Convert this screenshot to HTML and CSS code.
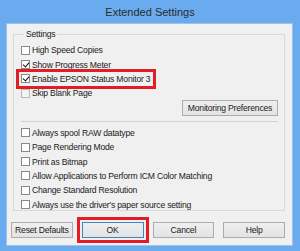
FILE: index.html
```html
<!DOCTYPE html>
<html lang="en">

<head>
    <meta charset="UTF-8">
    <title>Extended Settings</title>
    <link rel="stylesheet" href="styles.css">
</head>

<body>
    <div class="window">
        <!-- title bar -->
        <div class="titlebar">Extended Settings</div>

        <div class="client">
            <fieldset class="group">
                <legend>Settings</legend>

                <div class="row"><span class="box"></span>High Speed Copies</div>
                <div class="row"><span class="box on"></span>Show Progress Meter</div>
                <div class="row mark"><span class="box on"></span>Enable EPSON Status Monitor 3</div>
                <div class="row"><span class="box dim"></span>Skip Blank Page</div>

                <div class="prefs">
                    <button class="btn wide">Monitoring Preferences</button>
                </div>

                <div class="sep"></div>

                <div class="row"><span class="box"></span>Always spool RAW datatype</div>
                <div class="row"><span class="box"></span>Page Rendering Mode</div>
                <div class="row"><span class="box"></span>Print as Bitmap</div>
                <div class="row"><span class="box"></span>Allow Applications to Perform ICM Color Matching</div>
                <div class="row"><span class="box"></span>Change Standard Resolution</div>
                <div class="row"><span class="box"></span>Always use the driver's paper source setting</div>
            </fieldset>

            <!-- dialog buttons -->
            <div class="actions">
                <button class="btn">Reset Defaults</button>
                <button class="btn default mark">OK</button>
                <button class="btn">Cancel</button>
                <button class="btn">Help</button>
            </div>
        </div>
    </div>
</body>

</html>
```

FILE: styles.css
```css
* {
    margin: 0;
    padding: 0;
    box-sizing: border-box;
}

body {
    background: #6aabf0;
    font-family: "Liberation Sans", Arial, sans-serif;
    font-size: 8.6px;
    letter-spacing: -0.2px;
    color: #1a1a1a;
}

.window {
    width: 300px;
    height: 251px;
}

.titlebar {
    height: 23px;
    line-height: 24px;
    text-align: center;
    font-size: 11px;
    letter-spacing: 0;
    color: #2b2b2b;
}

.client {
    margin: 0 7px 0 6px;
    height: 223px;
    background: #f0f0f0;
    border: 1px solid #9cc3ee;
    padding: 5px 7px 0 6px;
}

.group {
    border: 1px solid #d9d9d9;
    padding: 3px 6px 3px 7px;
    height: 182px;
}

.group legend {
    margin-left: 3px;
    padding: 0 2px;
    line-height: 11px;
}

.row {
    display: flex;
    align-items: center;
    height: 14.4px;
    white-space: nowrap;
}

.box {
    width: 9px;
    height: 9px;
    border: 1px solid #8a8a8a;
    background: #fff;
    margin-right: 2px;
    position: relative;
}

.box.dim {
    border-color: #b8b8b8;
    background: #f4f4f4;
}

.box.on::after {
    content: "";
    position: absolute;
    left: 2px;
    top: 0;
    width: 3px;
    height: 5px;
    border-right: 1.5px solid #111;
    border-bottom: 1.5px solid #111;
    transform: rotate(40deg);
}

.row.mark {
    width: fit-content;
    margin-left: -2px;
    padding: 0 3px 0 2px;
    outline: 3px solid #e11d25;
}

.prefs {
    display: flex;
    justify-content: flex-end;
    margin-top: -1px;
}

.sep {
    border-top: 1px solid #d0d0d0;
    margin: 5px 0 4px 0;
}

.btn {
    font-family: inherit;
    font-size: 8.6px;
    letter-spacing: -0.2px;
    color: #1a1a1a;
    height: 16px;
    width: 62px;
    background: linear-gradient(#efefef, #e3e3e3);
    border: 1px solid #acacac;
}

.btn.wide {
    width: 96px;
}

.btn.default {
    border-color: #3d84c8;
}

.btn.mark {
    outline: 3px solid #e11d25;
    outline-offset: 2px;
}

.actions {
    display: flex;
    gap: 9px;
    margin: 11px 0 0 -2px;
}
```
